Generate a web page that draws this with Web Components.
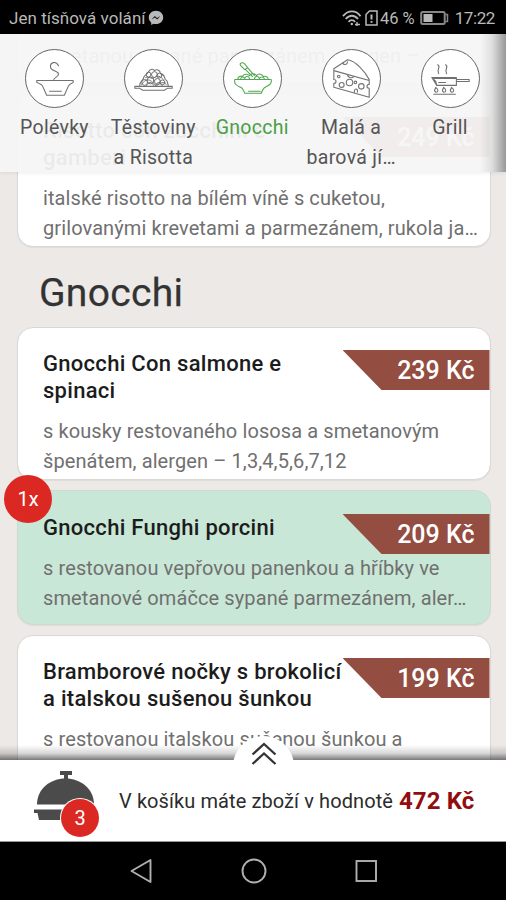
<!DOCTYPE html>
<html lang="cs">
<head>
<meta charset="utf-8">
<title>Menu</title>
<style>
html,body{margin:0;padding:0}
body{width:506px;height:900px;overflow:hidden;font-family:Roboto,"Liberation Sans",sans-serif;background:#ece9e7}
</style>
</head>
<body>
<menu-app></menu-app>
<script>
function define(name, html) {
  const t = document.createElement('template');
  t.innerHTML = html;
  customElements.define(name, class extends HTMLElement {
    constructor() {
      super();
      this.attachShadow({mode: 'open'}).appendChild(t.content.cloneNode(true));
    }
  });
}

define('status-bar', `
<style>
:host{display:flex;height:34px;background:#000;color:#b9b9b9;align-items:center;padding:2px 11px 0 9px;box-sizing:border-box;font-size:17px}
.l{letter-spacing:.04px}
.sp{flex:1}
svg{display:block;flex:none}
</style>
<span class="l">Jen tísňová volání</span>
<svg width="16" height="16" viewBox="0 0 16 16" style="margin-left:2px"><path d="M8 .8C3.900.8.8 3.700.8 7.500c0 2 .9 3.700 2.400 4.900V15l2.300-1.300c.8.2 1.600.3 2.500.3 4.100 0 7.200-2.900 7.200-6.600S12.100.8 8 .8z" fill="#b9b9b9"/><path d="M3.500 9.500 6.800 6l2.200 1.900L12.300 6 9.200 9.500 7 7.600z" fill="#111"/></svg>
<span class="sp"></span>
<svg width="20" height="17" viewBox="0 0 20 17" fill="none" stroke="#b9b9b9" stroke-width="1.900"><path d="M1 6.200C6-.2 14-.2 18.500 6.200M3.700 9C7.400 4.600 12.500 4.600 16 9M6.500 11.800c2-2.300 4.600-2.300 6.600 0"/><circle cx="9.800" cy="14" r="1.200" fill="#b9b9b9" stroke="none"/><path d="M13 14.500h5M15 12v4" stroke-width="1.400"/></svg>
<svg width="13" height="16" viewBox="0 0 13 16" style="margin-left:3px" fill="none" stroke="#b9b9b9" stroke-width="1.500"><path d="M4.500 1H12v14H1V4.500z"/><path d="M6.500 4.500v5M6.500 11v1.800" stroke-width="2"/></svg>
<span style="margin-left:2px;font-size:16.500px;letter-spacing:0">46 %</span>
<svg width="29" height="16" viewBox="0 0 29 16" style="margin-left:5px"><rect x="1.200" y="2" width="23.500" height="12" rx="1.500" fill="none" stroke="#888" stroke-width="2"/><rect x="3.500" y="4" width="9" height="8" fill="#b9b9b9"/><path d="M25.500 4.500h2v7h-2" fill="none" stroke="#888" stroke-width="1.500"/></svg>
<span style="margin-left:6px;font-size:17px;letter-spacing:-.4px">17:22</span>
`);

define('category-item', `
<style>
:host{display:flex;flex-direction:column;align-items:center;width:98.900px;flex:none;color:#555;--ink:#707070;text-align:center}
:host([active]){color:#4a9f45;--ink:#4fa84f}
.ring{width:57px;height:57px;border-radius:50%;border:1px solid #666;background:#fff;box-sizing:content-box;display:flex;align-items:center;justify-content:center}
.label{margin-top:5px;font-size:19.500px;line-height:30px;letter-spacing:.3px;white-space:nowrap}
::slotted(svg){width:57px;height:57px;fill:none;stroke:var(--ink);stroke-width:1.100;stroke-linejoin:round;stroke-linecap:round}
</style>
<div class="ring"><slot name="icon"></slot></div>
<div class="label"><slot></slot></div>
`);

define('category-bar', `
<style>
:host{display:flex;height:138px;padding:15px 0 0 5px;box-sizing:border-box;align-items:flex-start;
background:linear-gradient(90deg,transparent 480px,rgba(70,70,70,.13) 492px,rgba(60,60,60,.5) 506px),rgba(245,245,245,.95);box-shadow:0 1px 4px rgba(0,0,0,.08)}
</style><slot></slot>
`);

define('price-tag', `
<style>
:host{display:block;width:147px;height:40px;background:#944d41;clip-path:polygon(0 0,100% 0,100% 100%,39px 100%);color:#fff;font-weight:500;font-size:25px;line-height:41px;text-align:right;padding-right:15px;box-sizing:border-box;white-space:nowrap}
</style><slot></slot>
`);

define('count-badge', `
<style>
:host{display:flex;align-items:center;justify-content:center;border-radius:50%;background:#dc2823;color:#fff;width:48px;height:48px;font-size:20px}
</style><slot></slot>
`);

define('dish-card', `
<style>
:host{display:block;position:relative;box-sizing:border-box;min-height:135px;padding:22px 0 2px 25px;border:1px solid #dad7d5;border-radius:16px;background:#fff;box-shadow:0 1px 1px rgba(0,0,0,.06)}
:host([selected]){background:#c9e7d7;border-color:#cfd9d1}
.t{font-weight:500;font-size:22px;line-height:27px;color:#1c1c1c;white-space:nowrap;letter-spacing:.29px}
.d{font-size:20px;line-height:30px;color:#707070;white-space:nowrap;margin-top:12px;padding-bottom:1px;letter-spacing:.1px}
:host([selected]) .t{padding-top:1px}
.price{position:absolute;right:0;top:22px}
:host([selected]) .price{top:23px}
.badge{position:absolute;left:-14px;top:-16px}
</style>
<div class="t"><slot name="title"></slot></div>
<div class="d"><slot></slot></div>
<div class="price"><slot name="price"></slot></div>
<div class="badge"><slot name="badge"></slot></div>
`);

define('cart-bar', `
<style>
:host{display:flex;position:relative;height:82px;box-sizing:border-box;background:#fff;align-items:center;padding-left:33px;color:#2c2c2c;border-bottom:1px solid #999}
.shade{position:absolute;left:0;right:0;top:-15px;height:15px;background:linear-gradient(rgba(60,60,60,0),rgba(60,60,60,.2) 55%,rgba(50,50,50,.65))}
.bump{position:absolute;left:233px;top:-24px;width:61px;height:61px;border-radius:50%;background:#fff}
.bump svg{display:block;margin:4px 0 0 16.500px}
.icon{position:relative;width:66px;height:66px;margin-top:2px}
count-badge{position:absolute;left:28px;top:30px;width:38px;height:38px;font-size:20px;box-shadow:0 0 0 1px #fff}
.msg{position:relative;margin-left:20px;font-size:20px;letter-spacing:.09px;white-space:nowrap}
.sum{margin-left:6px;font-size:24px;font-weight:700;color:#920d10;white-space:nowrap;letter-spacing:.1px}
</style>
<div class="shade"></div>
<div class="bump"><svg width="28" height="28" viewBox="0 0 28 28" fill="none" stroke="#333" stroke-width="2.300"><path d="M2.500 14.500 14 4l11.500 10.500M2.500 24 14 13.500 25.500 24"/></svg></div>
<div class="icon"><svg width="66" height="56" viewBox="0 0 66 56"><g fill="#4b4b4b"><path d="M27 2h12v4h-4v4h-4V6h-4z"/><path d="M4 35.500C4 20 17 9.500 32.500 9.500S61 20 61 35.500z"/><path d="M1 40.500h62V44h-4l-2 7H6l-1.500-7H1z"/></g></svg><count-badge>3</count-badge></div>
<span class="msg">V košíku máte zboží v hodnotě</span><span class="sum">472 Kč</span>
`);

define('system-nav', `
<style>
:host{display:block;height:58px;background:#000}
svg{display:block}
</style>
<svg width="506" height="58" viewBox="0 0 506 58" fill="none" stroke="#b0b0b0" stroke-width="1.900"><path d="M150.500 18v22l-19-11z" stroke-linejoin="round"/><circle cx="254" cy="29" r="11.500"/><rect x="356.500" y="19" width="19.500" height="20"/></svg>
`);

define('menu-app', `
<style>
:host{display:flex;flex-direction:column;width:506px;height:900px}
.view{position:relative;height:726px;overflow:hidden;background:#ece9e7}
.list{display:flex;flex-direction:column;gap:10px;margin:-85px 15.500px 0 17px}
h1{margin:14px 0 2px 22px;font-weight:400;font-size:39px;line-height:44px;color:#333;letter-spacing:.3px;-webkit-text-stroke:.25px #333}
category-bar{position:absolute;left:0;right:0;top:0}
</style>
<status-bar></status-bar>
<div class="view">
<div class="list">
<dish-card><span slot="title">&nbsp;</span>&nbsp;<br>smetanou sypané parmezánem, alergen –</dish-card>
<dish-card><span slot="title">Risotto con zucchini e<br>gamberi</span>italské risotto na bílém víně s cuketou,<br>grilovanými krevetami a parmezánem, rukola ja…<price-tag slot="price">249 Kč</price-tag></dish-card>
<h1>Gnocchi</h1>
<dish-card><span slot="title">Gnocchi Con salmone e<br>spinaci</span>s kousky restovaného lososa a smetanovým<br>špenátem, alergen – 1,3,4,5,6,7,12<price-tag slot="price">239 Kč</price-tag></dish-card>
<dish-card selected><span slot="title">Gnocchi Funghi porcini</span>s restovanou vepřovou panenkou a hříbky ve<br>smetanové omáčce sypané parmezánem, aler…<price-tag slot="price">209 Kč</price-tag><count-badge slot="badge">1x</count-badge></dish-card>
<dish-card><span slot="title">Bramborové nočky s brokolicí<br>a italskou sušenou šunkou</span>s restovanou italskou sušenou šunkou a<br>&nbsp;<price-tag slot="price">199 Kč</price-tag></dish-card>
</div>
<category-bar>
<category-item><svg slot="icon" viewBox="0 0 58 58"><path d="M11 31h37v2c-3 1-4 2-5 4l-4 9H21l-4-9c-1-2-3-3-6-4zM24 42h12M28 31c0-3 4-3 5-6 1-4-7-3-8-7-1-6 6-7 8-2"/></svg>Polévky</category-item>
<category-item><svg slot="icon" viewBox="0 0 58 58"><path d="M10 37h38v2h-5l-3 2H18l-3-2h-5zM15 36c0-4 3-4 4-8 1-3 4-3 5-6 2-3 5-3 6-1 3-2 6 0 6 3 4 0 4 4 5 6 3 1 2 4 3 6"/><g stroke-width="1"><circle cx="20" cy="33" r="3"/><circle cx="26" cy="31" r="3.500"/><circle cx="33" cy="32" r="3"/><circle cx="38" cy="33" r="2.500"/><circle cx="24" cy="25" r="2.500"/><circle cx="30" cy="25" r="3"/><circle cx="35" cy="26" r="2.500"/><path d="M17 35c5-8 10-4 13 0s7-6 12 0M21 28c4-2 6 3 9 0s6-1 9 2M22 36c2-4 5-4 7 0M31 36c2-4 5-4 7 0"/></g></svg>Těstoviny<br>a Risotta</category-item>
<category-item active><svg slot="icon" viewBox="0 0 58 58"><path d="M11 30h37c1 5-3 6-6 8-2 1-3 3-4 6H21c-1-3-2-5-4-6-4-2-7-3-6-8zM25 42h12M14 30c0-3 3-4 5-3 1-3 5-3 7-1 2-3 6-2 7 0 3-3 6-1 7 1 3-1 5 1 5 3M17 16c-2-3 2-4 4-2l3 4-3 2zM22 20l7 7M24 18l7 8"/><path d="M17 29c1-2 3-2 4 0 1-3 4-3 5 0M31 29c1-3 4-3 5 0 1-2 4-2 5 0"/></svg>Gnocchi</category-item>
<category-item><svg slot="icon" viewBox="0 0 58 58"><path d="M11 19l14-9c8 1 18 12 22 20v5c-3 0-3 4 0 4v9L11 38v-4c3 0 3-4 0-4zM11 21l36 10"/><circle cx="27" cy="33" r="3.300"/><circle cx="19" cy="35.500" r="2.500"/><circle cx="39" cy="37" r="2.800"/><circle cx="33" cy="33" r="1.300"/><circle cx="16" cy="27" r="1.300"/><path d="M25 25c0 4 6 4 6 2M32 43c-1-4 4-5 3 0M20 13c1 3 5 2 5-1"/></svg>Malá a<br>barová jí…</category-item>
<category-item><svg slot="icon" viewBox="0 0 58 58"><path d="M10 28h25v8H15l-1-4zM10 28l5 8M12 29h22M35 30h13v2H35M17 33h7M12 45h22"/><path d="M16 15c4 2-2 5 1 9M24 15c4 2-2 5 1 9M14 43c-3-2 0-3 0-5 4 3 2 5 0 5zM22 43c-3-2 0-3 0-5 4 3 2 5 0 5zM30 43c-3-2 0-3 0-5 4 3 2 5 0 5z"/></svg>Grill</category-item>
</category-bar>
</div>
<cart-bar></cart-bar>
<system-nav></system-nav>
`);
</script>
</body>
</html>
